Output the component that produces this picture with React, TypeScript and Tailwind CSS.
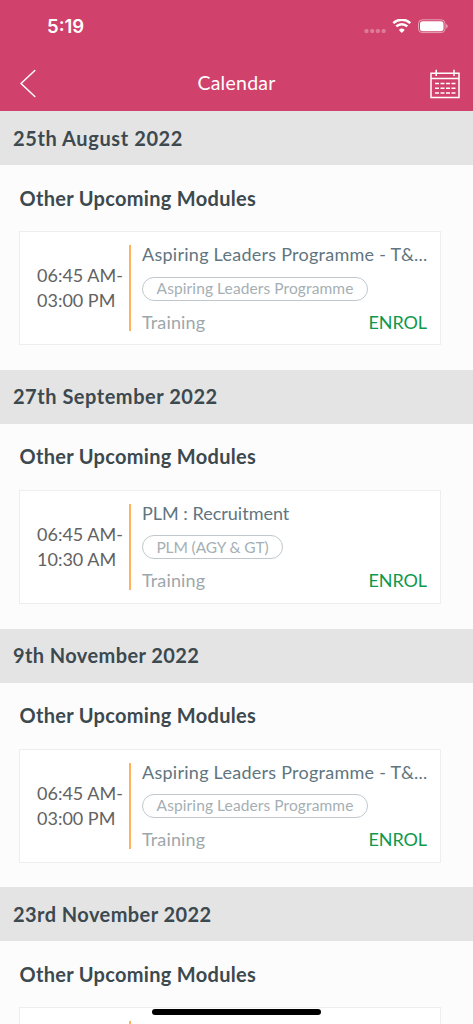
type Session = {
  date: string;
  start: string;
  end: string;
  title: string;
  programme: string;
  dateClass: string;
  titleClass: string;
  pillClass: string;
};

const leaders = {
  start: "06:45 AM-",
  end: "03:00 PM",
  title: "Aspiring Leaders Programme - T&...",
  programme: "Aspiring Leaders Programme",
  titleClass: "tracking-[0.26px]",
  pillClass: "w-[226px] tracking-[0.1px]",
};

const sessions: Session[] = [
  { ...leaders, date: "25th August 2022", dateClass: "tracking-[0.6px]" },
  {
    date: "27th September 2022",
    start: "06:45 AM-",
    end: "10:30 AM",
    title: "PLM : Recruitment",
    programme: "PLM (AGY & GT)",
    dateClass: "tracking-[0.52px]",
    titleClass: "tracking-[0px]",
    pillClass: "w-[141px] tracking-[-0.1px]",
  },
  { ...leaders, date: "9th November 2022", dateClass: "tracking-[0.4px]" },
  { ...leaders, date: "23rd November 2022", dateClass: "tracking-[0.43px]" },
];

function StatusBar() {
  return (
    <div className="flex h-[56px] items-center justify-between pl-[47px] pr-[25px] text-white">
      <span className="mt-[-4px] font-['Inter',sans-serif] text-[18.5px] font-semibold leading-6">5:19</span>
      <svg width="84" height="18" viewBox="0 0 84 18" fill="none" className="mt-[-1px]">
        <g fill="#fff" fillOpacity=".3">
          <rect x="0.5" y="10" width="4" height="4" rx="1.5" />
          <rect x="6.2" y="10" width="4" height="4" rx="1.5" />
          <rect x="11.9" y="10" width="4" height="4" rx="1.5" />
          <rect x="17.6" y="10" width="4" height="4" rx="1.5" />
        </g>
        <path d="M29.300 4.100A12.400 12.400 0 0 1 46.300 4.100M32.300 7.400A8 8 0 0 1 43.300 7.400" stroke="#fff" strokeWidth="2.500" />
        <path d="M37.800 14L34.900 10.900A4.300 4.300 0 0 1 40.700 10.900Z" fill="#fff" />
        <rect x="54.500" y=".8" width="26.500" height="12.800" rx="3.800" stroke="#fff" strokeOpacity=".5" />
        <rect x="56" y="2.200" width="23.500" height="10" rx="2.600" fill="#fff" />
        <path d="M82.200 5a2.400 2.400 0 0 1 0 4.400Z" fill="#fff" fillOpacity=".55" />
      </svg>
    </div>
  );
}

function NavBar() {
  return (
    <div className="grid h-[55px] grid-cols-[1fr_auto_1fr] items-center pl-[19px] pr-[12px] text-white">
      <svg width="18" height="30" viewBox="0 0 18 30" fill="none" stroke="#fff" strokeWidth="1.5" strokeLinecap="round" strokeLinejoin="round">
        <path d="M15.800 1.500L2 14.500L15.800 27.500" />
      </svg>
      <h1 className="mb-[2px] mr-[7px] text-[19.500px] leading-6 tracking-[0.25px]">Calendar</h1>
      <svg width="32" height="32" viewBox="0 0 32 32" fill="none" stroke="#fff" strokeWidth="1.500" className="justify-self-end">
        <path d="M2 5.200H30V29.500H2ZM2 10.500H30M7.200 1.700V8M25 1.700V8" />
        <path d="M6 15.500H10M11.500 15.500H15.500M17 15.500H21M22.500 15.500H26.500M6 20.200H10M11.500 20.200H15.500M17 20.200H21M22.500 20.200H26.500M6 25H10M11.500 25H15.500M17 25H21M22.500 25H26.500" />
      </svg>
    </div>
  );
}

function SessionGroup({ s }: { s: Session }) {
  return (
    <section className="h-[258.750px] shrink-0">
      <h2 className={`flex h-[54px] items-center bg-[#e4e4e4] pb-[1px] pl-[13px] text-[20px] font-bold text-[#3c494f] ${s.dateClass}`}>
        {s.date}
      </h2>
      <h3 className="flex h-[66px] items-center pb-[1px] pl-[19.500px] text-[20px] font-bold tracking-[0.3px] text-[#3c494f]">
        Other Upcoming Modules
      </h3>
      <div className="ml-[19px] flex h-[114px] w-[422px] items-center border-[1.500px] border-[#eeeeee] bg-white">
        <div className="w-[108.500px] shrink-0 whitespace-nowrap pl-[17px] text-[18px] leading-[25px] text-[#626262]">
          <div>{s.start}</div>
          <div>{s.end}</div>
        </div>
        <div className="h-[86px] w-[2px] shrink-0 bg-[#ffb35c]" />
        <div className="ml-[11.500px] flex h-[92px] w-[285px] flex-col">
          <div className={`whitespace-nowrap text-[18px] leading-[24px] text-[#607580] ${s.titleClass}`}>{s.title}</div>
          <div className={`mt-[10.500px] flex h-[24px] items-center justify-center whitespace-nowrap rounded-full border border-[#c0c8cd] text-[15.500px] text-[#a5afb4] ${s.pillClass}`}>
            {s.programme}
          </div>
          <div className="mt-[9px] flex justify-between text-[18px] leading-[24px]">
            <span className="tracking-[0.15px] text-[#9da7ab]">Training</span>
            <button className="tracking-[-0.1px] text-[#10984b]">ENROL</button>
          </div>
        </div>
      </div>
    </section>
  );
}

export default function App() {
  return (
    <div className="relative flex h-[1024px] w-[473px] flex-col overflow-hidden bg-[#fcfcfc] font-['Lato',sans-serif]">
      <header className="h-[111px] shrink-0 bg-[#d0426b]">
        <StatusBar />
        <NavBar />
      </header>
      <main>
        {sessions.map((s) => (
          <SessionGroup key={s.date} s={s} />
        ))}
      </main>
      <div className="absolute bottom-[9px] left-[152px] h-[6px] w-[169px] rounded-full bg-black" />
    </div>
  );
}
